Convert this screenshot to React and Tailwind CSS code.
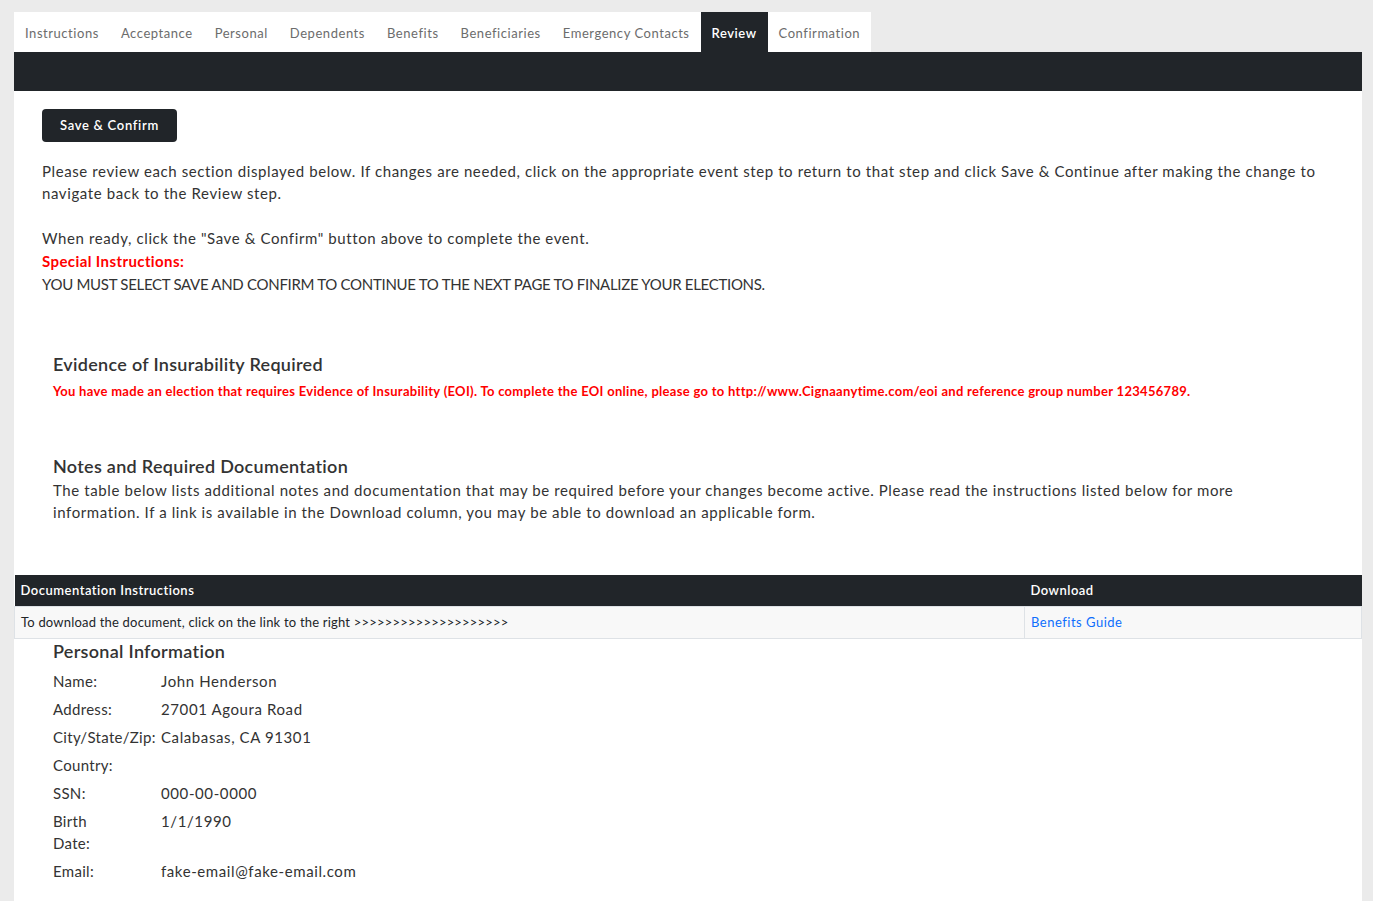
import React from "react";

const steps = [
  "Instructions",
  "Acceptance",
  "Personal",
  "Dependents",
  "Benefits",
  "Beneficiaries",
  "Emergency Contacts",
  "Review",
  "Confirmation",
];

const person = [
  ["Name:", "John Henderson"],
  ["Address:", "27001 Agoura Road"],
  ["City/State/Zip:", "Calabasas, CA 91301"],
  ["Country:", ""],
  ["SSN:", "000-00-0000"],
  [["Birth", "Date:"], "1/1/1990"],
  ["Email:", "fake-email@fake-email.com"],
];

function StepTabs({ current }) {
  return (
    <div className="flex pt-3">
      <div className="flex bg-white">
        {steps.map((s) => {
          const active = s === current;
          return (
            <div
              key={s}
              className={[
                "h-10 px-[11px] pt-[3px] flex items-center text-[13px] tracking-[0.55px]",
                active ? "bg-[#212529] text-white font-semibold" : "text-[#6c6c6c]",
              ].join(" ")}
            >
              {s}
            </div>
          );
        })}
      </div>
    </div>
  );
}

export default function App() {
  return (
    <div
      className="min-h-[901px] bg-[#ebebeb] pl-[14px] pr-[11px] text-[#333]"
      style={{ fontFamily: "Lato, 'Noto Sans', sans-serif" }}
    >
      <StepTabs current="Review" />
      <div className="bg-white pb-10">
        <div className="h-[39px] bg-[#212529]" />

        <div className="px-7 pt-[18px]">
          <button className="h-[33px] px-[18px] rounded bg-[#212529] text-white text-[13px] font-semibold tracking-[0.7px]">
            Save &amp; Confirm
          </button>

          <div className="mt-[18px] text-[15px] leading-[22px] tracking-[0.6px]">
            <p>
              Please review each section displayed below. If changes are needed, click on the
              appropriate event step to return to that step and click Save &amp; Continue after
              making the change to navigate back to the Review step.
            </p>
            <p className="mt-[23px] leading-[23px]">
              When ready, click the "Save &amp; Confirm" button above to complete the event.
            </p>
            <p className="leading-[23px] font-bold text-[#ff0000] tracking-[0.4px]">Special Instructions:</p>
            <p className="leading-[23px] tracking-[-0.3px]">
              YOU MUST SELECT SAVE AND CONFIRM TO CONTINUE TO THE NEXT PAGE TO FINALIZE YOUR ELECTIONS.
            </p>
          </div>
        </div>

        <section className="px-[39px] mt-[56px]">
          <h2 className="text-[18px] font-semibold leading-[24px] tracking-[0.3px]">
            Evidence of Insurability Required
          </h2>
          <p className="mt-[6px] text-[13px] font-bold text-[#ff0000] leading-[18px] tracking-[0.3px]">
            You have made an election that requires Evidence of Insurability (EOI). To complete the
            EOI online, please go to http://www.Cignaanytime.com/eoi and reference group number
            123456789.
          </p>
        </section>

        <section className="px-[39px] mt-[54px]">
          <h2 className="text-[18px] font-semibold leading-[24px] tracking-[0.3px]">
            Notes and Required Documentation
          </h2>
          <p className="mt-[1px] text-[15px] leading-[22px] tracking-[0.6px] pr-[40px]">
            The table below lists additional notes and documentation that may be required before
            your changes become active. Please read the instructions listed below for more
            information. If a link is available in the Download column, you may be able to download
            an applicable form.
          </p>
        </section>

        <table className="mt-[52px] w-full border-collapse text-[13px]">
          <thead>
            <tr className="bg-[#212529] text-white tracking-[0.5px]">
              <th className="h-[31px] px-[6px] text-left font-semibold">Documentation Instructions</th>
              <th className="h-[31px] px-[6px] text-left font-semibold w-[337px]">Download</th>
            </tr>
          </thead>
          <tbody>
            <tr className="bg-[#f8f8f8]">
              <td className="h-[32px] px-[6px] pt-[2px] border border-[#dee2e6] text-[#212529] tracking-[0.2px]">
                To download the document, click on the link to the right &gt;&gt;&gt;&gt;&gt;&gt;&gt;&gt;&gt;&gt;&gt;&gt;&gt;&gt;&gt;&gt;&gt;&gt;&gt;&gt;
              </td>
              <td className="h-[32px] px-[6px] pt-[2px] border border-[#dee2e6] tracking-[0.5px]">
                <a className="text-[#0d6efd]">Benefits Guide</a>
              </td>
            </tr>
          </tbody>
        </table>

        <section className="px-[39px]">
          <h2 className="text-[18px] font-semibold leading-[24px] tracking-[0.3px]">Personal Information</h2>
          <div className="mt-[4px] text-[15px] tracking-[0.6px]">
            {person.map(([label, value]) => (
              <div key={value || "country"} className="flex py-[3px] leading-[22px]">
                <div className="w-[108px] shrink-0 tracking-[0.3px]">
                  {Array.isArray(label)
                    ? label.map((l) => <div key={l}>{l}</div>)
                    : label}
                </div>
                <div>{value}</div>
              </div>
            ))}
          </div>
        </section>
      </div>
    </div>
  );
}
